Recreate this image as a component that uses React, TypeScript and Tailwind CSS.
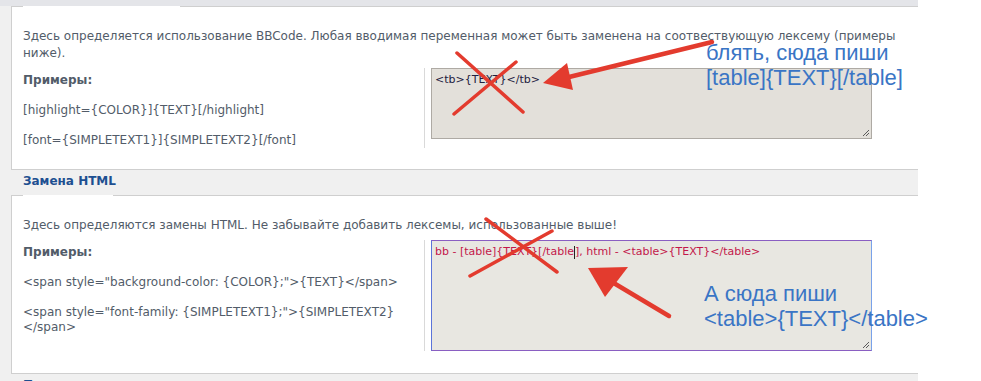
import React from 'react';

// уголок для ресайза поля
const Grip: React.FC = () => (
  <svg className="absolute right-[1px] bottom-[1px]" width="9" height="9" viewBox="0 0 9 9">
    <path d="M8 2 L2 8 M8 5 L5 8" stroke="#5a5a5a" strokeWidth="1" />
  </svg>
);

const Section: React.FC<{
  tab: number;
  pb: string;
  desc: React.ReactNode;
  examples: React.ReactNode[];
  box: React.ReactNode;
}> = ({ tab, pb, desc, examples, box }) => (
  <div className={`ml-[11px] border-t border-b border-l border-[#cfcfcf] bg-white pl-[11px] ${pb}`}>
    <div className="-mt-px h-px bg-white" style={{ width: tab }} />
    <p className="mt-[21px] whitespace-nowrap leading-[17px]">{desc}</p>
    <div className="mt-[6px] flex">
      <div className="flex w-[401px] flex-col gap-[15px] pt-[5px] leading-[15px]">
        <p className="font-bold">Примеры:</p>
        {examples.map((e, i) => (
          <p key={i}>{e}</p>
        ))}
      </div>
      <div className="border-l border-[#d9d9d9] pl-[6px]">{box}</div>
    </div>
  </div>
);

const App: React.FC = () => {
  return (
    <div className="relative h-[381px] w-[981px] overflow-hidden bg-white font-['DejaVu_Sans',sans-serif] text-[12px] text-[#525c69]">
      <div className="w-[918px] bg-[#f0f0f0]">
        <div className="h-[6px] bg-[#e4e5e9]" />

        <Section
          tab={157}
          pb="pb-[21px]"
          desc={
            <>
              Здесь определяется использование BBCode. Любая вводимая переменная может быть заменена на соотвествующую лексему (примеры
              <br />
              ниже).
            </>
          }
          examples={['[highlight={COLOR}]{TEXT}[/highlight]', '[font={SIMPLETEXT1}]{SIMPLETEXT2}[/font]']}
          box={
            <div className="relative h-[71px] w-[441px] border border-[#aeaaa4] bg-[#e3e0da] px-[3px] py-[3px] text-[11px] leading-[15px] text-[#1e2040]">
              {'<tb>{TEXT}</tb>'}
              <Grip />
            </div>
          }
        />

        <div className="h-[25px] pl-[23px] pt-[3px] font-bold leading-[17px] text-[#1d4f91]">Замена HTML</div>

        <Section
          tab={90}
          pb="pb-[22px]"
          desc="Здесь определяются замены HTML. Не забывайте добавить лексемы, использованные выше!"
          examples={[
            '<span style="background-color: {COLOR};">{TEXT}</span>',
            <>
              {'<span style="font-family: {SIMPLETEXT1};">{SIMPLETEXT2}'}
              <br />
              {'</span>'}
            </>,
          ]}
          box={
            <div className="relative h-[111px] w-[441px] border border-t-[#8a5fc2] border-b-[#8a5fc2] border-l-[#5b74d9] border-r-[#79a2ea] bg-[#e8e7e1] px-[3px] py-[3px] text-[11px] leading-[15px] text-[#c3174b]">
              {'bb - [table]{TEXT}[/table'}
              <span className="inline-block h-[13px] w-px bg-[#222] align-middle" />
              {'], html - <table>{TEXT}</table>'}
              <Grip />
            </div>
          }
        />

        <div className="h-[25px] pl-[23px] pt-[3px] font-bold leading-[17px] text-[#1d4f91]">Прочее</div>
      </div>

      {/* пометки поверх скрина */}
      <svg className="pointer-events-none absolute inset-0" width="981" height="381" viewBox="0 0 981 381">
        <g stroke="#e33b2e" strokeWidth="3.5" strokeLinecap="round" fill="none">
          <path d="M457 53 L523 112 M516 62 L454 114" />
          <path d="M486 219 L557 272 M552 231 L470 276" />
          <path d="M712 42 L565 78" strokeWidth="4.5" />
          <path d="M669 316 L612 282" strokeWidth="4.5" />
        </g>
        <polygon points="543,83 567,63 573,90" fill="#e33b2e" />
        <polygon points="588,268 628,267 605,297" fill="#e33b2e" />
      </svg>

      <div className="absolute left-[706px] top-[40px] font-['Liberation_Sans',Arial,sans-serif] text-[22px] leading-[25px] text-[#3a75c5]">
        блять, сюда пиши
        <br />
        {'[table]{TEXT}[/table]'}
      </div>
      <div className="absolute left-[704px] top-[281px] font-['Liberation_Sans',Arial,sans-serif] text-[22px] leading-[25px] text-[#3a75c5]">
        А сюда пиши
        <br />
        {'<table>{TEXT}</table>'}
      </div>
    </div>
  );
};

export default App;
